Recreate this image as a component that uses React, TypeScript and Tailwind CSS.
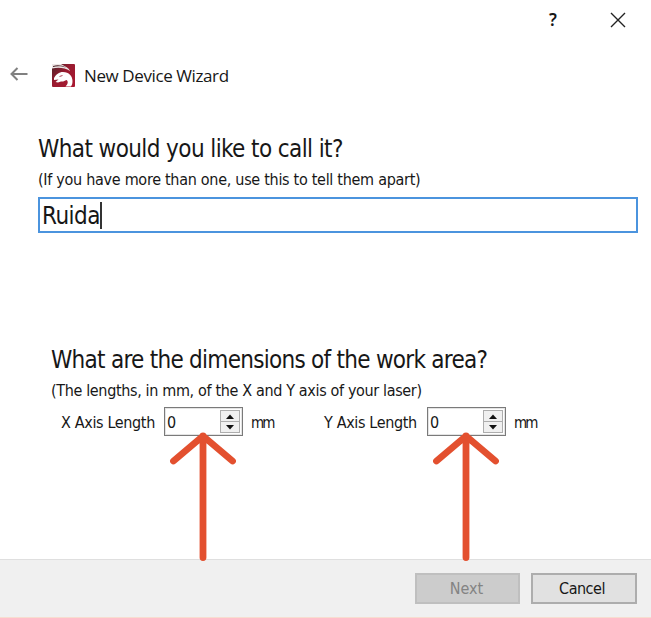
import React from "react";

function Logo() {
  return (
    <svg width="23" height="23" viewBox="0 0 23 23" className="block shrink-0">
      <defs>
        <linearGradient id="red" x1="0" y1="0" x2="1" y2="1">
          <stop offset="0" stopColor="#4a2429" />
          <stop offset="0.45" stopColor="#9a1b30" />
          <stop offset="1" stopColor="#aa1730" />
        </linearGradient>
      </defs>
      <rect width="23" height="23" rx="1" fill="url(#red)" />
      <path d="M0 0H9L15 3.500C17 5 18 6.500 18 7C13 3.500 6 3 0 4.500Z" fill="#eee6e6" />
      <path d="M1 2C5 0.500 10 1 14 3.500C9 2 5 2 1 3Z" fill="#4a2429" />
      <path d="M2 14C4 10.500 7 8 11 8C17 8 20.500 12 20.500 17C20.500 19.500 20 21 19 22.500H13.500C16 20 16.500 17.500 14.500 16C12.500 16.500 11.500 18 9 17.500L6 18.500L3.500 18L6.500 15.500L2 16Z" fill="#fff" />
      <path d="M7.500 12.500L10.500 11.500" fill="none" stroke="#b04a5c" strokeWidth="1" />
    </svg>
  );
}

function Pointer() {
  return (
    <svg width="72" height="132" viewBox="0 0 72 132" className="pointer-events-none absolute left-[3px] top-[23px]">
      <path d="M36 6V127.500M6.500 31L36 6L65.500 31" fill="none" stroke="#e3502f" strokeWidth="6.8" strokeLinecap="round" strokeLinejoin="round" />
    </svg>
  );
}

function SpinBox() {
  return (
    <div className="relative h-[29px] w-[79px] shrink-0">
      <div className="flex h-full w-full items-center justify-between border border-[#7a7a7a] bg-white pl-[2px] pr-[2px] shadow-[inset_0_0_0_1px_#e4e4e4]">
        <span className="pt-[2px] text-[16px] leading-[25px] tracking-[-0.3px]">0</span>
        <div className="flex h-[23px] w-[20px] flex-col border border-[#adadad] bg-[#f0f0f0]">
          <div className="flex flex-1 items-center justify-center border-b border-[#adadad]">
            <svg width="8" height="5" viewBox="0 0 8 5"><path d="M0 5L4 0.5L8 5Z" fill="#111" /></svg>
          </div>
          <div className="flex flex-1 items-center justify-center">
            <svg width="8" height="5" viewBox="0 0 8 5"><path d="M0 0L4 4.5L8 0Z" fill="#111" /></svg>
          </div>
        </div>
      </div>
      <Pointer />
    </div>
  );
}

export default function App() {
  return (
    <div className="flex h-[618px] w-[651px] flex-col overflow-hidden bg-white font-['DejaVu_Sans_Condensed','Noto_Sans',sans-serif] whitespace-nowrap text-[#171717]">
      <div className="flex h-[40px] shrink-0 items-center justify-end pr-[25px]">
        <span className="mr-[52px] w-[10px] text-center font-['Noto_Sans',sans-serif] text-[17px] font-semibold leading-[40px]">?</span>
        <svg width="16" height="16" viewBox="0 0 16 16"><path d="M1 1L15 15M15 1L1 15" stroke="#222" strokeWidth="1.4" fill="none" /></svg>
      </div>
      <header className="flex h-[70px] shrink-0 items-center pl-[10px]">
        <svg width="18" height="14" viewBox="0 0 18 14" className="mb-[3px]"><path d="M17.5 7H1.5M7.500 1L1.500 7L7.500 13" fill="none" stroke="#808080" strokeWidth="2" /></svg>
        <div className="ml-[24px]"><Logo /></div>
        <span className="ml-[9px] mt-[2px] font-['Open_Sans',sans-serif] text-[17px] leading-[24px] tracking-[-0.4px]">New Device Wizard</span>
      </header>
      <main className="flex-1">
        <section className="pl-[38px] pt-[23px]">
          <h1 className="h-[32px] text-[24px] leading-[32px] tracking-[-0.6px]">What would you like to call it?</h1>
          <p className="mt-[4px] h-[22px] text-[16px] leading-[22px] tracking-[-0.29px]">(If you have more than one, use this to tell them apart)</p>
          <div className="mt-[6px] flex h-[36px] w-[600px] items-center border-2 border-[#4b94de] pl-[2px]">
            <span className="pt-[2px] text-[24px] leading-[30px] tracking-[-0.5px]">Ruida</span>
            <span className="h-[27px] w-[2px] bg-[#333]" />
          </div>
        </section>
        <section className="pl-[51px] pt-[111px]">
          <h2 className="h-[32px] text-[24px] leading-[32px] tracking-[-0.73px]">What are the dimensions of the work area?</h2>
          <p className="mt-[4px] h-[22px] text-[16px] leading-[22px] tracking-[-0.35px]">(The lengths, in mm, of the X and Y axis of your laser)</p>
          <div className="mt-[5px] flex items-center text-[16px] leading-[22px] tracking-[-0.35px]">
            <span className="w-[113px] pl-[10px] pt-[2px]">X Axis Length</span>
            <SpinBox />
            <span className="w-[73px] pl-[8px] pt-[2px] text-[15px] tracking-[-1.9px]">mm</span>
            <span className="w-[111px] pl-[8px] pt-[2px]">Y Axis Length</span>
            <SpinBox />
            <span className="pl-[8px] pt-[2px] text-[15px] tracking-[-1.9px]">mm</span>
          </div>
        </section>
      </main>
      <footer className="flex h-[59px] shrink-0 items-center justify-end gap-[11px] border-b border-t border-b-[#f7ddd0] border-t-[#dfdfdf] bg-[#f0f0f0] pr-[14px] text-[16px] tracking-[-0.5px]">
        <button className="h-[31px] w-[105px] border-2 border-[#bfbfbf] bg-[#cccccc] pr-[2px] pt-px tracking-[0px] text-[#838383]">Next</button>
        <button className="h-[31px] w-[106px] border-2 border-[#adadad] bg-[#e1e1e1] pr-[4px] pt-px">Cancel</button>
      </footer>
    </div>
  );
}
